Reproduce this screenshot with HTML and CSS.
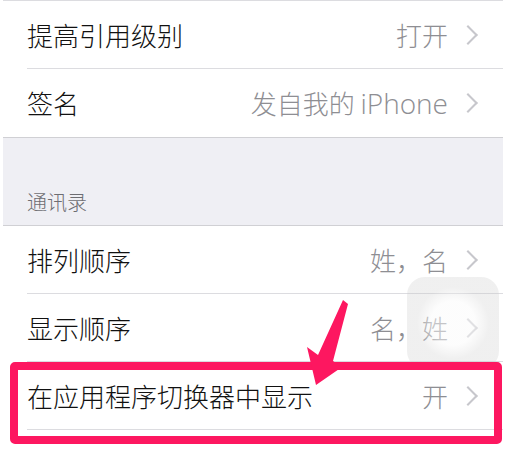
FILE: index.html
```html
<!DOCTYPE html>
<html lang="zh">
<head>
<meta charset="utf-8">
<link rel="stylesheet" href="styles.css">
</head>
<body>
<div class="screen">
  <div class="group">
    <div class="row"><span class="label">提高引用级别</span><span class="value">打开</span><span class="chev"></span></div>
    <div class="row"><span class="label">签名</span><span class="value">发自我的 <span class="latin">iPhone</span></span><span class="chev"></span></div>
  </div>
  <div class="section-head">通讯录</div>
  <div class="group open">
    <div class="row"><span class="label">排列顺序</span><span class="value">姓，名</span><span class="chev"></span></div>
    <div class="row"><span class="label">显示顺序</span><span class="value">名，姓</span><span class="chev"></span></div>
    <div class="row"><span class="label">在应用程序切换器中显示</span><span class="value">开</span><span class="chev"></span></div>
  </div>
</div>
<div class="assist"></div>
<div class="highlight"></div>
<svg class="arrow" width="509" height="449" viewBox="0 0 509 449">
  <path d="M343 300 L348 304 L333 361 L342 367 L316 385 L307 347 L318 355 Z" fill="#fd1760"/>
</svg>
</body>
</html>
```
FILE: styles.css
```css
html, body {
  margin: 0;
  padding: 0;
  background: #ffffff;
  width: 509px;
  height: 449px;
  overflow: hidden;
  position: relative;
}
.screen {
  margin-left: 3px;
  width: 500px;
  font-family: "Noto Sans CJK SC", "Liberation Sans", sans-serif;
  border-top: 1px solid #dcdce0;
}
.group {
  background: #ffffff;
  border-bottom: 1px solid #d0d0d4;
}
.group.open {
  border-bottom: none;
}
.row {
  display: flex;
  align-items: center;
  height: 67px;
  margin-left: 24px;
  padding-right: 25px;
  border-bottom: 1px solid #dcdce0;
}
.group .row:last-child {
  border-bottom: none;
  height: 68px;
}
.group.open .row:last-child {
  border-bottom: 1px solid #dcdce0;
  height: 67px;
}
.label {
  flex: 1;
  font-size: 26px;
  font-weight: 300;
  color: #111111;
  line-height: 1;
}
.value {
  font-size: 26px;
  font-weight: 300;
  color: #8e8e93;
  line-height: 1;
  margin-right: 13px;
  white-space: nowrap;
}
.latin {
  font-family: "Open Sans", "Liberation Sans", sans-serif;
  font-size: 28px;
  font-weight: 300;
  line-height: 1;
}
.chev {
  width: 12px;
  height: 12px;
  border-top: 2px solid #c7c7cc;
  border-right: 2px solid #c7c7cc;
  transform: rotate(45deg);
  margin-right: 3px;
}
.section-head {
  background: #efeff4;
  height: 88px;
  box-sizing: border-box;
  padding: 0 0 9px 24px;
  display: flex;
  align-items: flex-end;
  font-size: 20px;
  font-weight: 300;
  color: #6d6d72;
  border-bottom: 1px solid #d0d0d4;
}
.assist {
  position: absolute;
  left: 407px;
  top: 277px;
  width: 92px;
  height: 92px;
  border-radius: 18px;
  background: radial-gradient(circle at 50% 50%, rgba(250,250,250,0.5) 0, rgba(250,250,250,0.5) 22px, rgba(200,200,200,0.28) 36px, rgba(200,200,200,0.28) 100%);
}
.highlight {
  position: absolute;
  left: 10px;
  top: 362px;
  width: 492px;
  height: 82px;
  box-sizing: border-box;
  border: 8px solid #fd1760;
  border-radius: 5px;
}
.arrow {
  position: absolute;
  left: 0;
  top: 0;
}
```
